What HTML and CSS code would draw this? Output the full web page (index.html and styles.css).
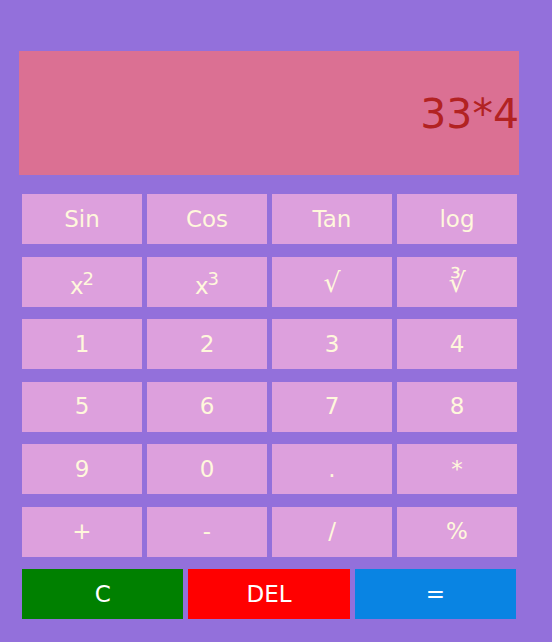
FILE: index.html
```html
<!DOCTYPE html>
<html>
<head>
<meta charset="utf-8">
<link rel="stylesheet" href="styles.css">
</head>
<body>
<div class="calc">
  <div class="display">33*4</div>
  <div class="keys">
    <button class="key">Sin</button>
    <button class="key">Cos</button>
    <button class="key">Tan</button>
    <button class="key">log</button>
    <button class="key pow">x<sup>2</sup></button>
    <button class="key pow">x<sup>3</sup></button>
    <button class="key sym">√</button>
    <button class="key sym">∛</button>
    <button class="key">1</button>
    <button class="key">2</button>
    <button class="key">3</button>
    <button class="key">4</button>
    <button class="key">5</button>
    <button class="key">6</button>
    <button class="key">7</button>
    <button class="key">8</button>
    <button class="key">9</button>
    <button class="key">0</button>
    <button class="key">.</button>
    <button class="key">*</button>
    <button class="key">+</button>
    <button class="key">-</button>
    <button class="key">/</button>
    <button class="key">%</button>
  </div>
  <div class="actions">
    <button class="act clear">C</button>
    <button class="act del">DEL</button>
    <button class="act eq">=</button>
  </div>
</div>
</body>
</html>
```
FILE: styles.css
```css
html, body {
  margin: 0;
  padding: 0;
  background: #9370db;
  height: 100%;
}
body {
  font-family: "DejaVu Sans", sans-serif;
}
.calc {
  padding: 51px 0 0 19px;
  width: 500px;
}
.display {
  height: 124px;
  background: #db7093;
  color: #b22222;
  font-size: 41px;
  display: flex;
  align-items: center;
  justify-content: flex-end;
  padding: 2px 0 0 0;
  box-sizing: border-box;
}
.keys {
  margin: 19px 0 0 3px;
  display: grid;
  grid-template-columns: repeat(4, 120px);
  grid-auto-rows: 50px;
  column-gap: 5px;
  row-gap: 12.5px;
}
.key, .act {
  border: none;
  margin: 0;
  padding: 0;
  font-family: "DejaVu Sans", sans-serif;
  font-size: 23px;
  line-height: 1;
  display: flex;
  align-items: center;
  justify-content: center;
}
.key {
  background: #dda0dd;
  color: #fff8dc;
}
.key.pow {
  padding-top: 10px;
}
.key sup {
  font-size: 18px;
  line-height: 1;
  position: relative;
  top: -8px;
  vertical-align: baseline;
  margin-left: -1px;
}
.key.sym {
  font-size: 27px;
  padding-top: 2px;
}
.actions {
  margin: 12.5px 0 0 3px;
  width: 494px;
  display: grid;
  grid-template-columns: repeat(3, 1fr);
  column-gap: 5px;
  height: 50px;
}
.act {
  color: #ffffff;
}
.clear { background: #008000; }
.del { background: #ff0000; }
.eq { background: #0984e3; }
```
